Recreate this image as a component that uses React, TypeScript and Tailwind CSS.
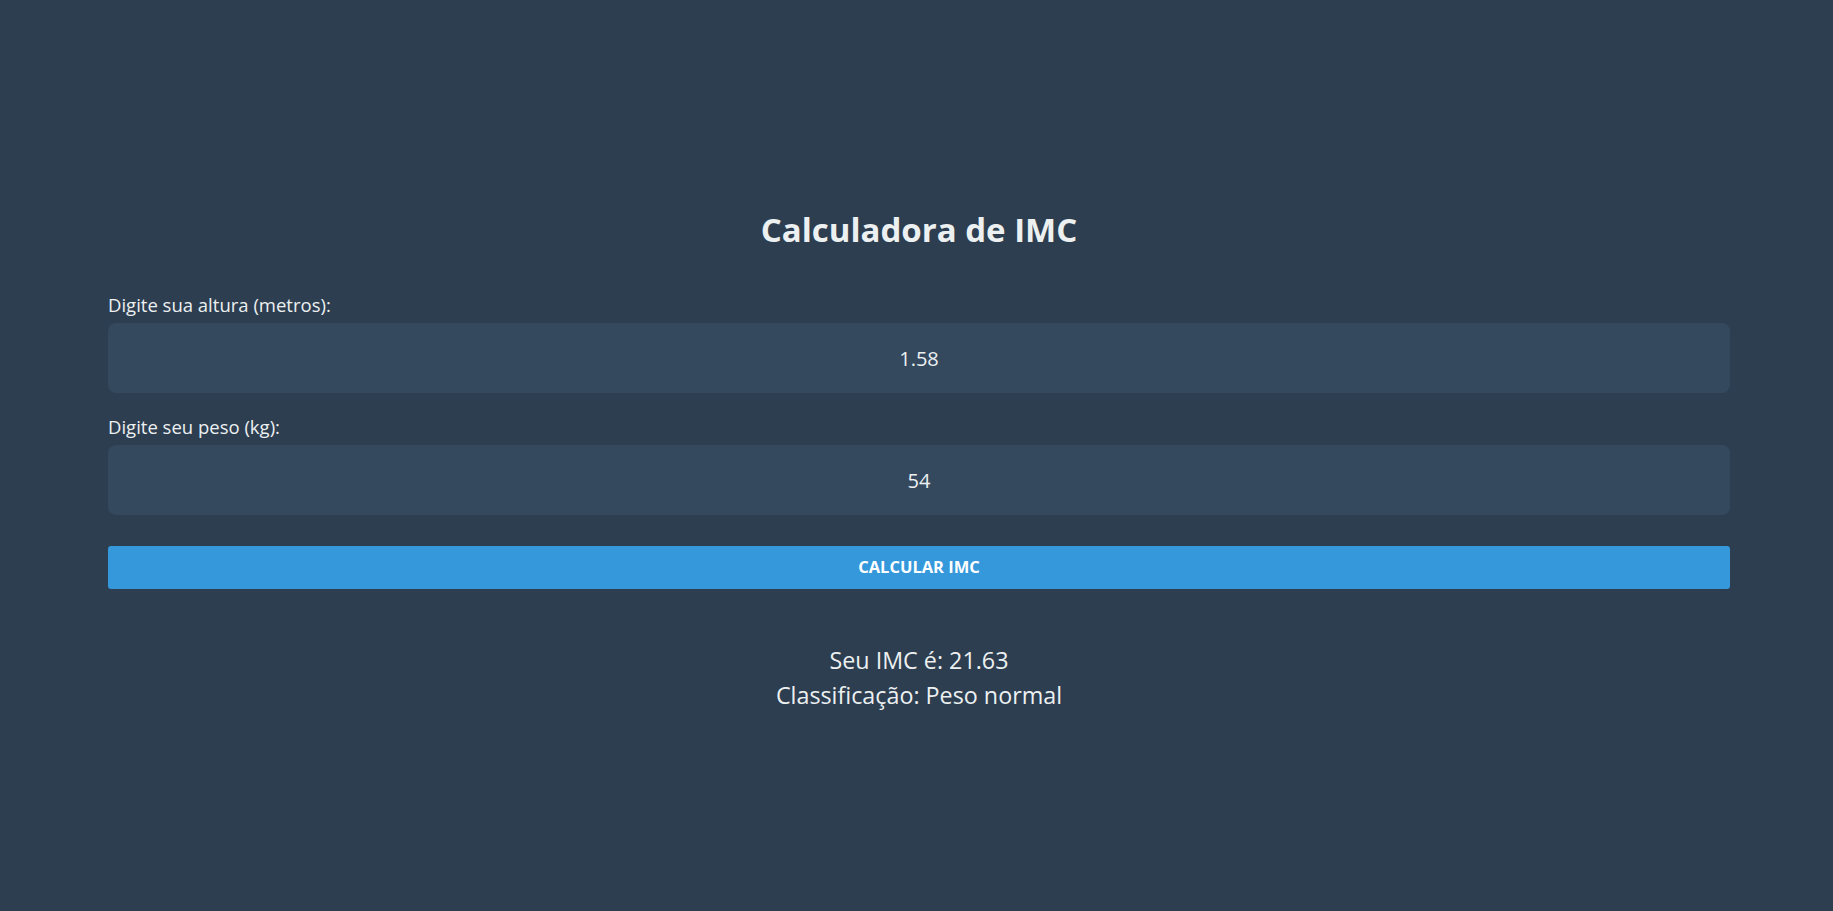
import React, { useState } from 'react';

export default function App() {
  const [altura, setAltura] = useState('1.58');
  const [peso, setPeso] = useState('54');

  const imc = parseFloat(peso) / (parseFloat(altura) * parseFloat(altura));

  const classificar = (v: number) => {
    if (v < 18.5) return 'Abaixo do peso';
    if (v < 25) return 'Peso normal';
    if (v < 30) return 'Sobrepeso';
    return 'Obesidade';
  };

  return (
    <div className="min-h-[911px] bg-[#2c3e50] text-[#ecf0f1] font-['Open_Sans',sans-serif]">
      <div className="ml-[108px] w-[1622px] pt-[206px]">
        <h1 className="text-center text-[33px] font-bold leading-[48px]">
          Calculadora de IMC
        </h1>

        {/* Campos */}
        <label className="mt-[39px] block text-[18.5px] leading-[24px]">
          Digite sua altura (metros):
        </label>
        <input
          value={altura}
          onChange={(e) => setAltura(e.target.value)}
          className="mt-[6px] block h-[70px] w-full rounded-lg bg-[#34495e] text-center text-[20px] text-[#ecf0f1] outline-none"
        />

        <label className="mt-[22px] block text-[18.5px] leading-[24px]">
          Digite seu peso (kg):
        </label>
        <input
          value={peso}
          onChange={(e) => setPeso(e.target.value)}
          className="mt-[6px] block h-[70px] w-full rounded-lg bg-[#34495e] text-center text-[20px] text-[#ecf0f1] outline-none"
        />

        <button className="mt-[31px] block h-[43px] w-full rounded-[3px] bg-[#3498db] text-[16.5px] font-bold uppercase text-white">
          Calcular IMC
        </button>

        {/* Resultado */}
        <div className="mt-[54px] text-center text-[23.3px] leading-[35px]">
          <p>Seu IMC é: {imc.toFixed(2)}</p>
          <p>Classificação: {classificar(imc)}</p>
        </div>
      </div>
    </div>
  );
}
